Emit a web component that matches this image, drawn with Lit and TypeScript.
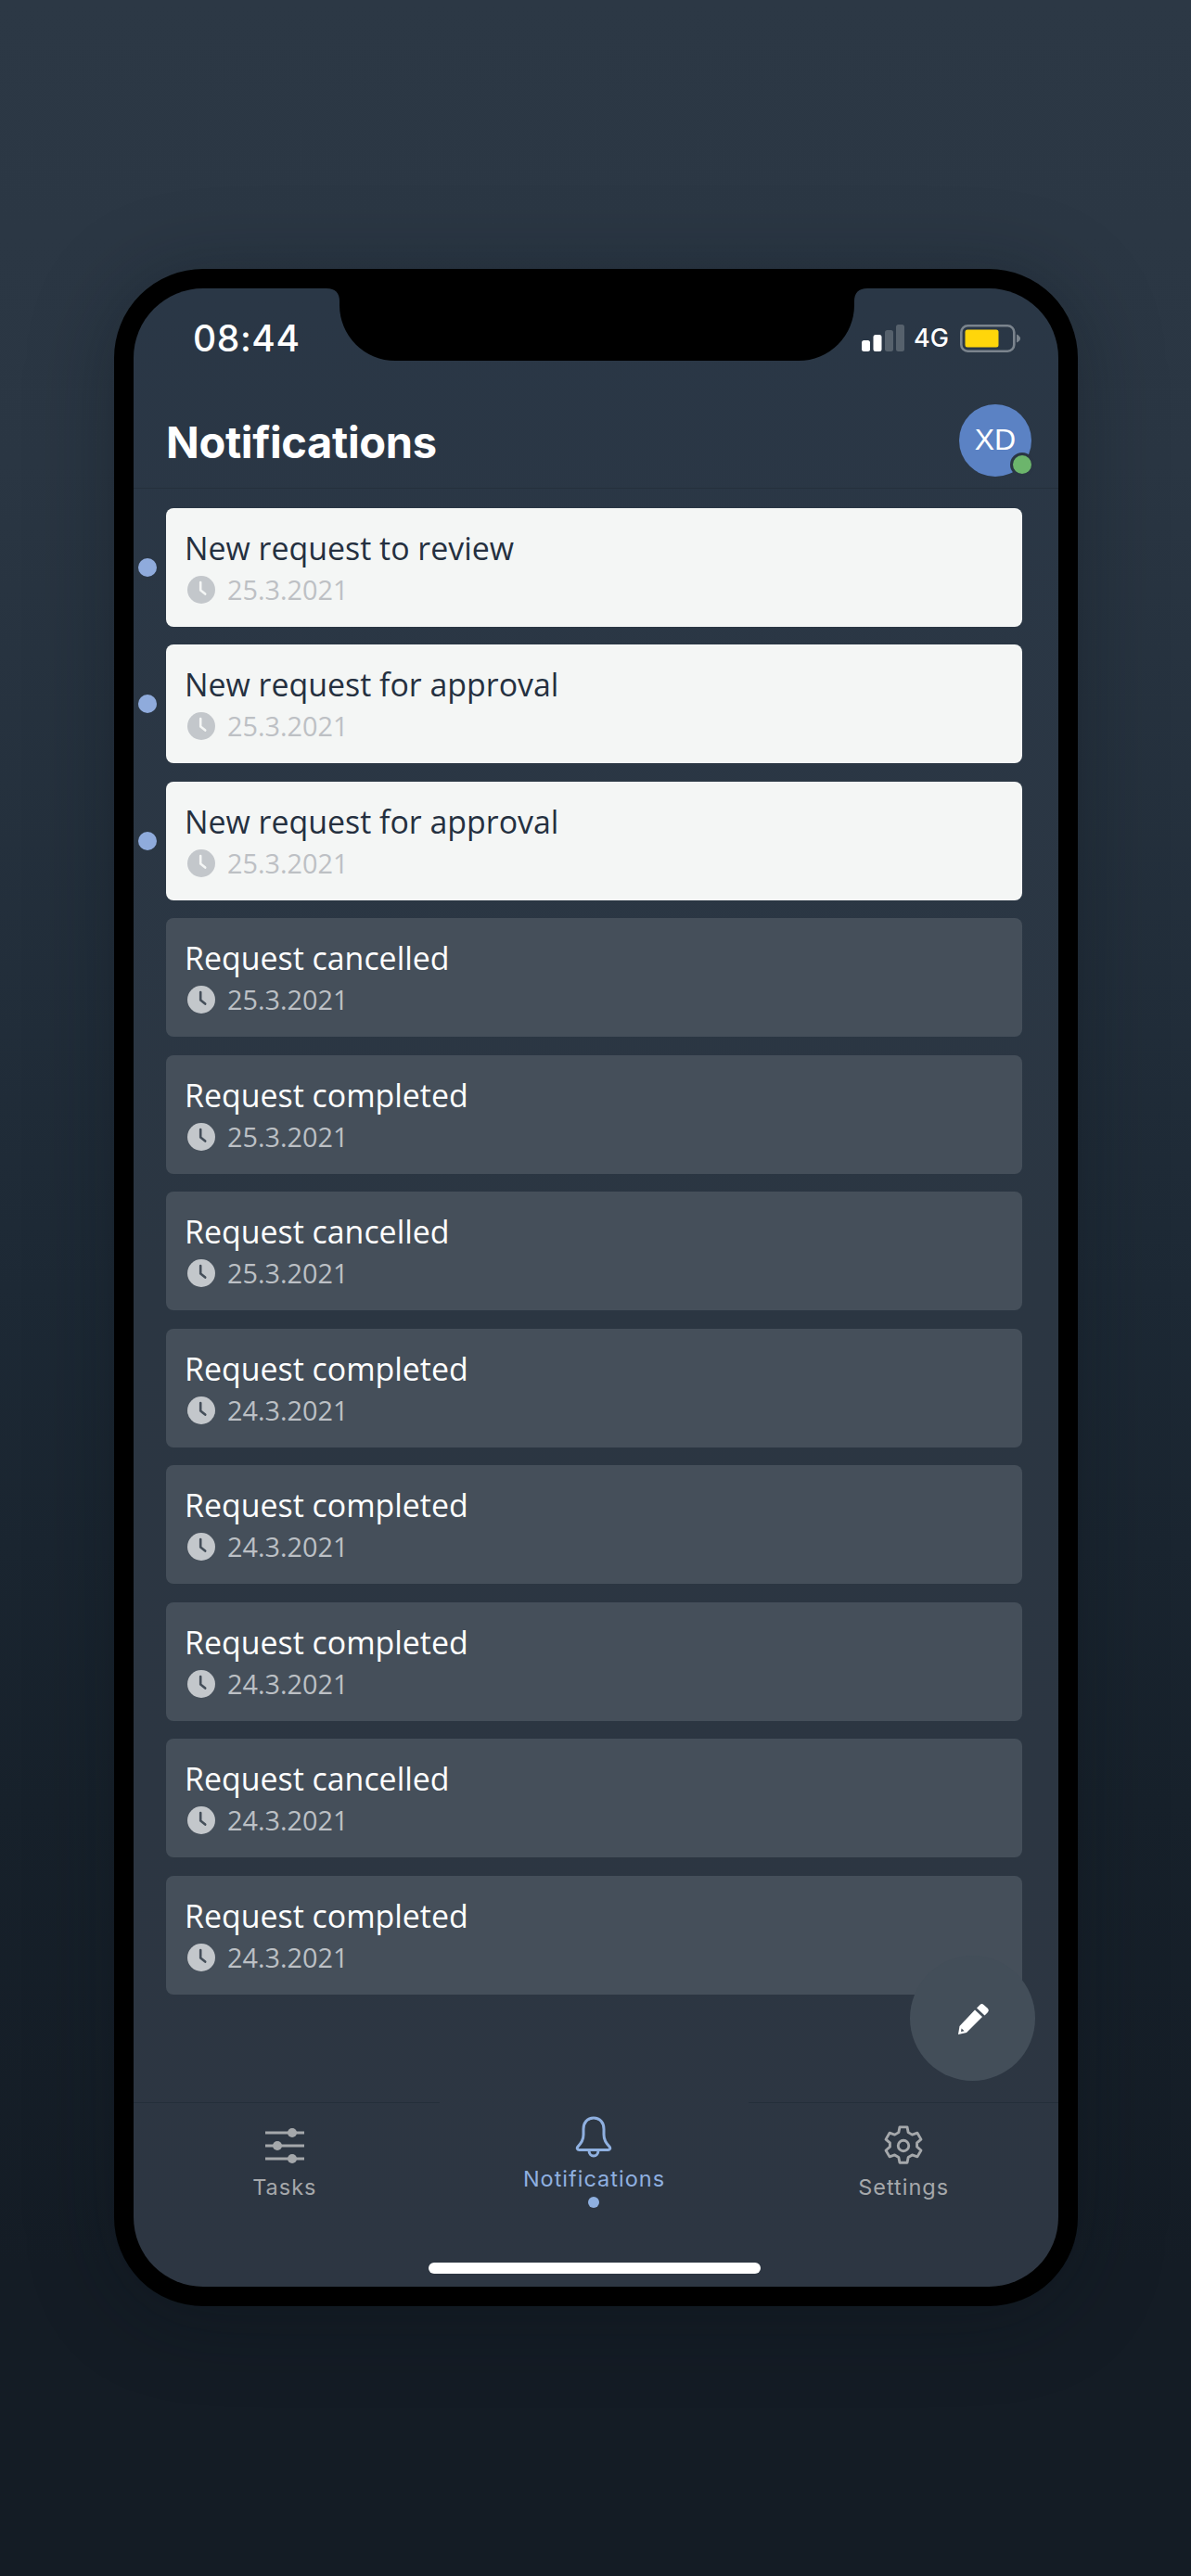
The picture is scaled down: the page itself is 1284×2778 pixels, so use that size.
import { LitElement, html, css } from "lit";
import { customElement } from "lit/decorators.js";

const clock = html`<svg class="clock" viewBox="0 0 30 30"><circle cx="15" cy="15" r="15" fill="currentColor"></circle><path class="hand" d="M14.2 7v8.6l5 4" fill="none" stroke-width="2.6" stroke-linecap="round" stroke-linejoin="round"></path></svg>`;

const items = [
  { t: "New request to review", d: "25.3.2021", u: true },
  { t: "New request for approval", d: "25.3.2021", u: true },
  { t: "New request for approval", d: "25.3.2021", u: true },
  { t: "Request cancelled", d: "25.3.2021", u: false },
  { t: "Request completed", d: "25.3.2021", u: false },
  { t: "Request cancelled", d: "25.3.2021", u: false },
  { t: "Request completed", d: "24.3.2021", u: false },
  { t: "Request completed", d: "24.3.2021", u: false },
  { t: "Request completed", d: "24.3.2021", u: false },
  { t: "Request cancelled", d: "24.3.2021", u: false },
  { t: "Request completed", d: "24.3.2021", u: false },
];

@customElement("app-root")
export class AppRoot extends LitElement {
  static styles = css`
    :host {
      display: block;
      width: 1284px;
      height: 2778px;
      overflow: hidden;
      box-sizing: border-box;
      padding: 290px 122px 0 123px;
      background: linear-gradient(180deg, #2c3845 0%, #2a3643 18%, #1d2935 50%, #17212b 70%, #141c25 88%, #141c25 100%);
      font-family: "Open Sans", sans-serif;
    }
    .phone {
      box-sizing: border-box;
      width: 1039px;
      height: 2197px;
      border: 21px solid #000;
      border-radius: 96px;
      box-shadow: 0 10px 90px rgba(10, 16, 22, 0.35);
      background: #000;
    }
    .screen {
      position: relative;
      height: 100%;
      display: flex;
      flex-direction: column;
      border-radius: 75px;
      overflow: hidden;
      background: linear-gradient(180deg, #2a3746 0%, #2b3642 50%, #2d3642 100%);
    }
    .notch {
      position: absolute;
      top: 0;
      left: 208px;
      width: 583px;
      height: 78px;
    }
    .status {
      height: 106px;
      flex: none;
      box-sizing: border-box;
      display: flex;
      justify-content: space-between;
      align-items: flex-start;
      padding: 32px 41px 0 64px;
      color: #fff;
    }
    .time {
      font-family: "Inter", sans-serif;
      font-weight: 500;
      font-size: 39px;
      line-height: 44px;
      letter-spacing: 0.6px;
    }
    .sys {
      display: flex;
      align-items: center;
      height: 44px;
    }
    .net {
      font-family: "Inter", sans-serif;
      font-size: 27px;
      font-weight: 500;
      margin: 0 12px 0 10px;
      line-height: 44px;
    }
    .head {
      height: 110px;
      flex: none;
      box-sizing: border-box;
      display: flex;
      align-items: center;
      justify-content: space-between;
      padding: 6px 29px 0 35px;
      border-bottom: 1px solid #25303c;
    }
    .title {
      font-family: "Inter", sans-serif;
      font-weight: 700;
      font-size: 47px;
      line-height: 60px;
      color: #fff;
      margin: 4px 0 0;
      letter-spacing: -0.35px;
    }
    .avatar {
      position: relative;
      width: 78px;
      height: 78px;
      border-radius: 50%;
      background: #5b82c4;
      color: #fff;
      display: flex;
      align-items: center;
      justify-content: center;
      font-family: "Liberation Sans", sans-serif;
      font-size: 32px;
    }
    .online {
      position: absolute;
      right: -3px;
      bottom: 0;
      width: 20px;
      height: 20px;
      border-radius: 50%;
      background: #6cb56c;
      border: 3px solid #2a3644;
    }
    .list {
      flex: none;
      display: flex;
      flex-direction: column;
      gap: 19.5px;
      padding: 20.5px 39px 0 35px;
    }
    .card {
      position: relative;
      height: 128px;
      box-sizing: border-box;
      padding: 21px 20px;
      border-radius: 8px;
      background: #454f5a;
      color: #fff;
    }
    .card.unread {
      background: #f4f6f5;
      color: #253040;
    }
    .dot {
      position: absolute;
      left: -30px;
      top: 54px;
      width: 20px;
      height: 20px;
      border-radius: 50%;
      background: #8fabdc;
    }
    .t {
      font-size: 33.9px;
      line-height: 44px;
    }
    .d {
      display: flex;
      align-items: center;
      gap: 13px;
      margin-top: 5px;
      padding-left: 3px;
      font-size: 28.8px;
      line-height: 36px;
      color: #bcc0c5;
    }
    .unread .d {
      color: #bdc0c4;
    }
    .clock {
      width: 30px;
      height: 30px;
      flex: none;
      color: #c3c7cb;
    }
    .hand {
      stroke: #454f5a;
    }
    .unread .hand {
      stroke: #f4f6f5;
    }
    .spacer {
      flex: 1;
    }
    .fab {
      position: absolute;
      left: 837px;
      top: 1798px;
      width: 135px;
      height: 135px;
      border-radius: 50%;
      background: #434e59;
      display: flex;
      align-items: center;
      justify-content: center;
    }
    .fab svg {
      width: 38px;
      height: 38px;
    }
    .tabs {
      flex: none;
      height: 199px;
      margin-left: -4px;
      display: grid;
      grid-template-columns: 1fr 1fr 1fr;
    }
    .tab {
      display: flex;
      flex-direction: column;
      align-items: center;
      box-sizing: border-box;
      padding-top: 23px;
      border-top: 1px solid #242f3a;
      color: #a5a8ab;
      font-family: "Inter", sans-serif;
      font-size: 23.5px;
      line-height: 30px;
      letter-spacing: 1px;
    }
    .tab svg {
      width: 46px;
      height: 46px;
      margin-bottom: 7px;
    }
    .tab.active {
      border-top-color: transparent;
      padding-top: 13px;
      color: #8fb0e0;
    }
    .tab.active svg {
      margin-bottom: 8px;
    }
    .pip {
      width: 12px;
      height: 12px;
      border-radius: 50%;
      background: #8fb0e0;
      margin-top: 4px;
    }
    .home {
      position: absolute;
      left: 318px;
      bottom: 14px;
      width: 358px;
      height: 12px;
      border-radius: 6px;
      background: #fff;
    }
  `;

  render() {
    return html`<div class="phone">
      <div class="screen">
        <svg class="notch" viewBox="0 0 583 78"><path d="M0 0Q14 0 14 14V18A60 60 0 0 0 74 78H509A60 60 0 0 0 569 18V14Q569 0 583 0Z" fill="#000"></path></svg>
        <div class="status">
          <div class="time">08:44</div>
          <div class="sys">
            <svg width="46" height="30" viewBox="0 0 46 30">
              <rect x="0" y="17" width="9" height="12" rx="2.5" fill="#fff"></rect>
              <rect x="12.500" y="11" width="9" height="18" rx="2.5" fill="#fff"></rect>
              <rect x="25" y="6" width="9" height="23" rx="2.5" fill="#56616c"></rect>
              <rect x="37" y="0" width="9" height="29" rx="2.5" fill="#56616c"></rect>
            </svg>
            <span class="net">4G</span>
            <svg width="65" height="30" viewBox="0 0 65 30">
              <rect x="1.300" y="1.300" width="57" height="27.400" rx="7" fill="none" stroke="#7b848d" stroke-width="2.600"></rect>
              <rect x="5.500" y="5.500" width="36" height="19" rx="2.500" fill="#ffd60a"></rect>
              <path d="M61 10.500Q65 12.500 65 15T61 19.500Z" fill="#7b848d"></path>
            </svg>
          </div>
        </div>
        <div class="head">
          <h1 class="title">Notifications</h1>
          <div class="avatar">XD<span class="online"></span></div>
        </div>
        <div class="list">
          ${items.map(
            (i) => html`<div class="card ${i.u ? "unread" : ""}">
              ${i.u ? html`<span class="dot"></span>` : ""}
              <div class="t">${i.t}</div>
              <div class="d">${clock}<span>${i.d}</span></div>
            </div>`
          )}
        </div>
        <div class="spacer"></div>
        <div class="fab">
          <svg viewBox="0 0 38 38"><path d="M3 36l1.500-9L21 9.500l8 7.500L12 34z" fill="#fff"></path><path d="M23 7.500l3.500-3.500a3 3 0 0 1 4 0l4.500 4a3 3 0 0 1 0 4l-3.500 3.500z" fill="#fff"></path><path d="M6 33l.6-3.500 3 2.700z" fill="#434e59"></path></svg>
        </div>
        <div class="tabs">
          <div class="tab">
            <svg viewBox="0 0 46 46" fill="none" stroke="currentColor" stroke-width="3">
              <path d="M2 9h42M2 23h42M2 37h42"></path>
              <g fill="currentColor" stroke="none"><circle cx="31" cy="9" r="5"></circle><circle cx="15" cy="23" r="5"></circle><circle cx="31" cy="37" r="5"></circle></g>
            </svg>
            Tasks
          </div>
          <div class="tab active">
            <svg viewBox="0 0 46 46" fill="none" stroke="currentColor" stroke-width="3" stroke-linejoin="round" stroke-linecap="round">
              <path d="M23 3c-7 0-11 5.500-11 12v6c0 6-2.500 9-6 13-1.500 1.800-.5 3.500 1.500 3.500h31c2 0 3-1.700 1.500-3.500-3.500-4-6-7-6-13v-6c0-6.500-4-12-11-12z"></path>
              <path d="M18 38c0 8 10 8 10 0"></path>
            </svg>
            Notifications
            <span class="pip"></span>
          </div>
          <div class="tab">
            <svg viewBox="0 0 24 24" fill="none" stroke="currentColor" stroke-width="1.500" stroke-linejoin="round">
              <circle cx="12" cy="12" r="3"></circle>
              <path d="M9.900 1.500h4.200l.6 3 2.200 1.300 2.900-1 2.100 3.600-2.300 2v2.200l2.300 2-2.100 3.600-2.900-1-2.200 1.300-.6 3H9.900l-.6-3-2.200-1.300-2.900 1-2.100-3.600 2.300-2v-2.200l-2.300-2 2.100-3.600 2.900 1 2.200-1.300z"></path>
            </svg>
            Settings
          </div>
        </div>
        <div class="home"></div>
      </div>
    </div>`;
  }
}
